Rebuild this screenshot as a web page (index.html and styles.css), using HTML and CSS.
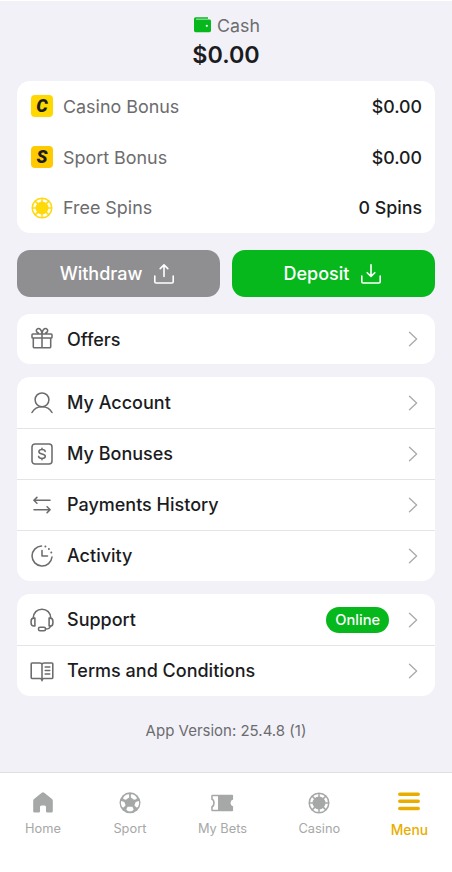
FILE: index.html
```html
<!DOCTYPE html>
<html lang="en">
<head>
<meta charset="utf-8">
<meta name="viewport" content="width=device-width, initial-scale=1">
<title>Menu</title>
<link rel="stylesheet" href="styles.css">
</head>
<body>
<svg class="defs" width="0" height="0" aria-hidden="true">
  <symbol id="chevron" viewBox="0 0 10 16"><path d="M1.5 1.2 L8.6 8 L1.5 14.8" fill="none" stroke="currentColor" stroke-width="1.4" stroke-linecap="round" stroke-linejoin="round"/></symbol>
  <symbol id="chip" viewBox="0 0 22 22">
    <circle cx="11" cy="11" r="9.8" fill="none" stroke="currentColor" stroke-width="1.5"/>
    <circle cx="11" cy="11" r="6.5" fill="currentColor"/>
    <path d="M11 1v20M1 11h20M3.9 3.9l14.2 14.2M18.1 3.9L3.9 18.1" stroke="currentColor" stroke-width="1.5"/>
  </symbol>
</svg>
<div class="app">
  <main class="content">
    <header class="cash">
      <div class="cash-label">
        <svg width="17" height="16" viewBox="0 0 17 16"><path fill="#06b81c" d="M1.6 .3H14V1.7H2V2.6H15.5Q17 2.6 17 4V13.6Q17 15.2 15.4 15.2H1.6Q0 15.2 0 13.6V1.9Q0 .3 1.6 .3Z"/><circle cx="12.8" cy="8.8" r="1.1" fill="#fff"/></svg>
        <span>Cash</span>
      </div>
      <div class="cash-value">$0.00</div>
    </header>

    <section class="card balances">
      <div class="balance"><span class="tile">C</span><span class="name">Casino Bonus</span><span class="amount">$0.00</span></div>
      <div class="balance"><span class="tile tile-sport">S</span><span class="name">Sport Bonus</span><span class="amount">$0.00</span></div>
      <div class="balance"><svg class="spin" width="22" height="22"><use href="#chip"/></svg><span class="name">Free Spins</span><span class="amount">0 Spins</span></div>
    </section>

    <div class="actions">
      <button class="button">Withdraw<svg width="20" height="20" viewBox="0 0 20 20"><path d="M.8 12V17.7Q.8 19 2.1 19H17.9Q19.2 19 19.2 17.7V12M10 12.5V1.2M6.2 4.6L10 .9L13.8 4.6"/></svg></button>
      <button class="button deposit">Deposit<svg width="20" height="20" viewBox="0 0 20 20"><path d="M.8 12V17.7Q.8 19 2.1 19H17.9Q19.2 19 19.2 17.7V12M10 .8V12.2M6.2 8.7L10 12.4L13.8 8.7"/></svg></button>
    </div>

    <nav class="card list">
      <a class="row"><svg class="icon" viewBox="0 0 24 24"><path d="M2.8 7H21.2Q22 7 22 7.8V10.2Q22 11 21.2 11H2.8Q2 11 2 10.2V7.8Q2 7 2.8 7ZM3.3 11V19.7Q3.3 20.8 4.4 20.8H19.6Q20.7 20.8 20.7 19.7V11M12 7V20.8M12 6.8C11.6 2.4 9.4 1 7.6 1.7C5.7 2.5 5.8 5.3 8.4 5.9M12 6.8C12.4 2.4 14.6 1 16.4 1.7C18.3 2.5 18.2 5.3 15.6 5.9"/></svg><span class="title">Offers</span><svg class="chevron"><use href="#chevron"/></svg></a>
    </nav>

    <nav class="card list">
      <a class="row"><svg class="icon" viewBox="0 0 24 24"><circle cx="12" cy="8.8" r="6.9"/><path d="M2 21.5C4.2 17.5 8 15.7 12 15.7S19.8 17.5 22 21.5"/></svg><span class="title">My Account</span><svg class="chevron"><use href="#chevron"/></svg></a>
      <a class="row"><svg class="icon" viewBox="0 0 24 24"><rect x="2" y="2" width="20" height="20" rx="3"/><path d="M15.2 9.5C15 8.1 13.8 7.5 12 7.5C10.1 7.5 8.9 8.3 8.9 9.7C8.9 13 15.3 10.8 15.3 14.3C15.3 15.7 14 16.5 12 16.5C10 16.5 8.8 15.8 8.6 14.4M12 6.2V7.5M12 16.5V17.8"/></svg><span class="title">My Bonuses</span><svg class="chevron"><use href="#chevron"/></svg></a>
      <a class="row"><svg class="icon" viewBox="0 0 24 24"><path d="M20 7.3H4.2M6.9 4.4L3.9 7.3L6.9 10.2M4 16.7H19.8M17.1 13.8L20.1 16.7L17.1 19.6"/></svg><span class="title">Payments History</span><svg class="chevron"><use href="#chevron"/></svg></a>
      <a class="row"><svg class="icon" viewBox="0 0 24 24"><path d="M11.5 2A10 10 0 1 0 22 13M12 6.5V12H17.5"/><path class="dots" d="M15.4 2.6h.01M18.9 4.9h.01M21.3 8.5h.01"/></svg><span class="title">Activity</span><svg class="chevron"><use href="#chevron"/></svg></a>
    </nav>

    <nav class="card list">
      <a class="row"><svg class="icon" viewBox="0 0 24 24"><path d="M3.2 10C3.4 4.7 7 1.2 12 1.2S20.6 4.7 20.8 10M4.9 10.1V18H3.8Q1.1 18 1.1 14.9V13.2Q1.1 10.1 3.8 10.1ZM19.1 10.1V18H20.2Q22.9 18 22.9 14.9V13.2Q22.9 10.1 20.2 10.1ZM20.5 18C20.2 20 18.5 21 15.7 21"/><rect x="8.5" y="19.2" width="7" height="3.6" rx="1.5"/></svg><span class="title">Support</span><span class="badge">Online</span><svg class="chevron"><use href="#chevron"/></svg></a>
      <a class="row"><svg class="icon" viewBox="0 0 24 24"><path d="M12 5.2Q11.7 4 9.8 4H2Q1.2 4 1.2 4.8V18.6Q1.2 19.4 2 19.4H10.2Q12 19.4 12 21.7M12 5.2Q12.3 4 14.2 4H22Q22.8 4 22.8 4.8V18.6Q22.8 19.4 22 19.4H13.8Q12 19.4 12 21.7V5.2M15.2 8H19.8M15.2 11.5H19.8M15.2 15H19.8"/></svg><span class="title">Terms and Conditions</span><svg class="chevron"><use href="#chevron"/></svg></a>
    </nav>

    <p class="version">App Version: 25.4.8 (1)</p>
  </main>

  <nav class="tabs">
    <a class="tab"><svg width="22" height="22" viewBox="0 0 22 22"><path fill="currentColor" d="M9.8 .8Q11 -.2 12.2 .8L20 7.1Q20.8 7.8 20.8 9V19.3Q20.8 20.5 19.6 20.5H15.2Q14 20.5 14 19.3V15Q14 13.5 12.5 13.5H9.5Q8 13.5 8 15V19.3Q8 20.5 6.8 20.5H2.4Q1.2 20.5 1.2 19.3V9Q1.2 7.8 2 7.1Z"/></svg>Home</a>
    <a class="tab"><svg width="22" height="22" viewBox="0 0 22 22"><circle cx="11" cy="10.8" r="10.5" fill="currentColor"/><g fill="#fff"><path d="M6.8 3.1Q9 1.8 10.1 2.4V5.4L6.9 7.8Q4.4 7.3 4 6.2Q4.7 4.4 6.8 3.1Z"/><path d="M15.2 3.1Q13 1.8 11.9 2.4V5.4L15.1 7.8Q17.6 7.3 18 6.2Q17.3 4.4 15.2 3.1Z"/><path d="M2.2 9.1L5.3 9.9L6.6 13.3L4.6 15.6Q2.4 15.3 2 12.2Q1.7 10.4 2.2 9.1Z"/><path d="M19.8 9.1L16.7 9.9L15.4 13.3L17.4 15.6Q19.6 15.3 20 12.2Q20.3 10.4 19.8 9.1Z"/><path d="M8.6 14.8H13.4L14.7 17.5Q13.8 19.6 11 19.6T7.3 17.5Z"/></g></svg>Sport</a>
    <a class="tab"><svg width="24" height="22" viewBox="0 0 24 22"><path fill="currentColor" d="M2.4 2.7H22Q23.1 2.7 23.1 3.8V7.4Q20.5 8.2 20.5 11T23.1 14.6V18.2Q23.1 19.3 22 19.3H2.4Q1.2 19.3 1.2 18V14.5Q3.2 13.6 3.2 11T1.2 7.5V4Q1.2 2.7 2.4 2.7Z"/><path fill="#fff" d="M2.7 4.2H8V17.8H2.7V15.4Q4.8 14 4.8 11T2.7 6.6Z"/></svg>My Bets</a>
    <a class="tab"><svg width="22" height="22"><use href="#chip"/></svg>Casino</a>
    <a class="tab active"><svg width="22" height="22" viewBox="0 0 22 22"><path stroke="currentColor" stroke-width="3.5" stroke-linecap="round" d="M1.8 2.2H20.2M1.8 9.3H20.2M1.8 16.5H20.2"/></svg>Menu</a>
  </nav>
</div>
</body>
</html>
```

FILE: styles.css
```css
* { box-sizing: border-box; }
body {
  margin: 0;
  background: #fff;
  color: #1b1c1e;
  font-family: Inter, "Liberation Sans", sans-serif;
}
.defs { display: block; position: absolute; }
.app {
  width: 452px;
  height: 872px;
  display: flex;
  flex-direction: column;
  border-top: 1px solid #fff;
  overflow: hidden;
}
.content {
  height: 771px;
  flex: none;
  padding: 12px 17px 0;
  background: #f2f1f8;
}
.cash { height: 68px; text-align: center; }
.cash-label {
  height: 24px;
  display: flex;
  align-items: center;
  justify-content: center;
  gap: 6px;
  padding-left: 2px;
  font-size: 17.8px;
  color: #6c6c6e;
}
.cash-value { font-size: 23.3px; line-height: 36px; font-weight: 600; }
.card { background: #fff; border-radius: 13px; overflow: hidden; }
.balances { padding: 0 13px 0 14px; }
.balance { height: 50.8px; display: flex; align-items: center; font-size: 17.8px; }
.tile {
  width: 22px;
  height: 22px;
  border-radius: 4px;
  background: #ffd800;
  color: #1b1c1e;
  font-family: Roboto, Inter, sans-serif;
  font-size: 18px;
  line-height: 22px;
  font-weight: 900;
  font-style: italic;
  text-align: center;
}
.tile-sport { background: #ffcb00; }
.spin { color: #ffd90a; }
.name { margin-left: 10px; flex: 1; font-size: 17.9px; color: #6c6c6e; }
.amount { font-weight: 500; }
.actions { display: grid; grid-template-columns: 1fr 1fr; gap: 12px; margin: 17px 0; }
.button {
  height: 47px;
  display: flex;
  align-items: center;
  justify-content: center;
  gap: 12px;
  padding: 0 3px 0 0;
  border: 0;
  border-radius: 13px;
  background: #8f8f91;
  color: #fff;
  font: 500 18px Inter, "Liberation Sans", sans-serif;
}
.button svg { fill: none; stroke: currentColor; stroke-width: 1.6; stroke-linecap: round; stroke-linejoin: round; overflow: visible; }
.deposit { background: #06b81c; padding-right: 2px; }
.list { margin-bottom: 13px; }
.row { height: 51px; display: flex; align-items: center; padding: 0 17px 0 13px; }
.row:first-child:last-child { height: 50px; }
.row + .row { border-top: 1px solid #e4e4e6; padding-bottom: 1px; }
.icon {
  width: 24px;
  height: 24px;
  fill: none;
  stroke: #6c6c6e;
  stroke-width: 1.55;
  stroke-linecap: round;
  stroke-linejoin: round;
}
.dots { stroke-width: 2; }
.title { margin-left: 13px; flex: 1; font-size: 18px; font-weight: 500; }
.badge {
  height: 26px;
  padding: 0 9px;
  margin-right: 19px;
  border-radius: 13px;
  background: #06b81c;
  color: #fff;
  font-size: 14.6px;
  line-height: 26px;
  font-weight: 500;
}
.chevron { width: 10px; height: 16px; color: #acacae; }
.version { margin: 25px 0 0; text-align: center; font-size: 15px; line-height: 20px; color: #6c6c6e; }
.tabs {
  flex: 1;
  display: flex;
  align-items: flex-start;
  justify-content: space-between;
  padding: 19px 24px 0 25px;
  border-top: 1px solid #dfdfe2;
}
.tab {
  display: flex;
  flex-direction: column;
  align-items: center;
  gap: 7px;
  color: #a6a8a7;
  font-size: 12.8px;
  line-height: 16px;
}
.tab:first-child { margin-right: 1px; }
.tab.active { margin-left: -1px; color: #e9ad00; font-size: 13.8px; line-height: 18px; font-weight: 500; }
```
